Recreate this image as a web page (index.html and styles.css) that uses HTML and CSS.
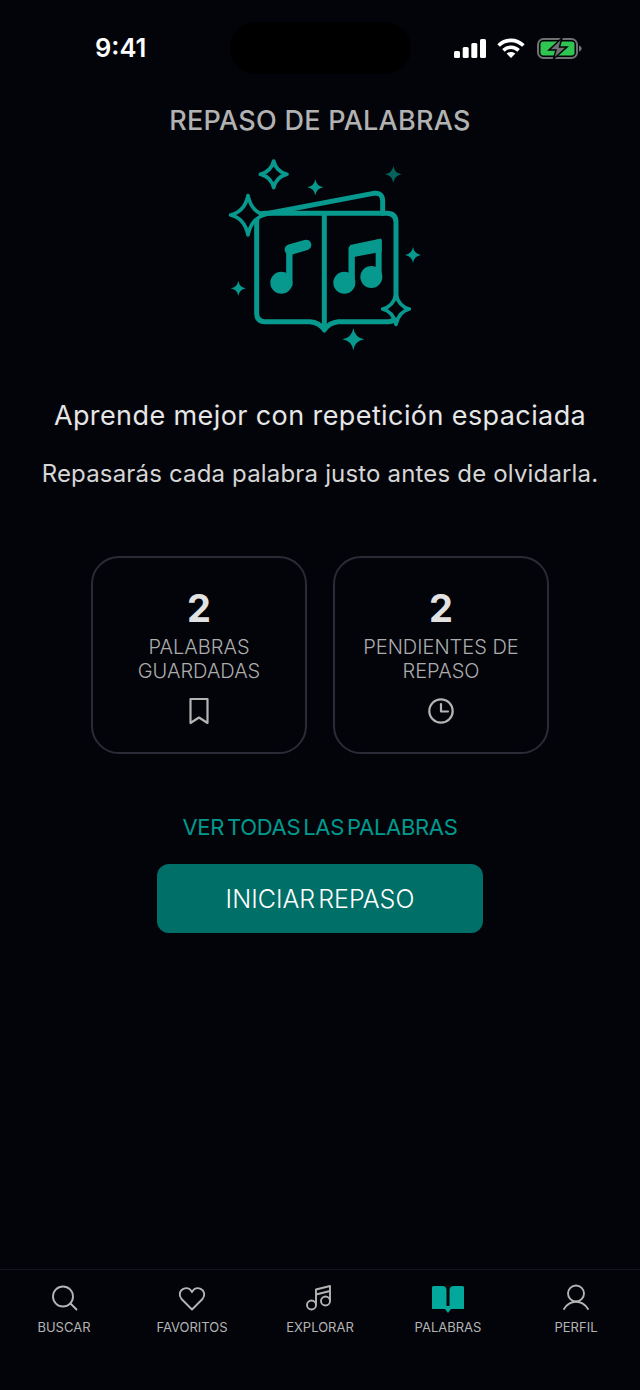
FILE: index.html
```html
<!DOCTYPE html>
<html lang="es">
  <head>
    <meta charset="UTF-8" />
    <meta name="viewport" content="width=device-width, initial-scale=1.0" />
    <title>Repaso de palabras</title>
    <link rel="stylesheet" href="styles.css">
  </head>
  <body>
    <header class="status-bar">
      <span class="status-time">9:41</span>
      <div class="island"></div>
      <div class="status-icons">
        <svg width="32" height="19" viewBox="0 0 32 19" fill="#fff">
          <rect x="0" y="12" width="6" height="7" rx="1.5" />
          <rect x="8.7" y="8" width="6" height="11" rx="1.5" />
          <rect x="17.3" y="4" width="6" height="15" rx="1.5" />
          <rect x="26" y="0" width="6" height="19" rx="1.5" />
        </svg>
        <svg class="wifi" width="28" height="20" viewBox="0 0 28 20" fill="none" stroke="#fff" stroke-width="3.6">
          <path d="M1.600 7.600C8.600 .6 19.400 .6 26.400 7.600" />
          <path d="M6.400 12.400C10.800 8.200 17.200 8.200 21.600 12.400" />
          <path d="M14 20l-4.400-4.400c2.500-2.100 6.300-2.100 8.800 0z" fill="#fff" stroke="none" />
        </svg>
        <svg class="battery" width="45" height="21" viewBox="0 0 45 21">
          <rect x="1" y="1" width="39" height="19" rx="5.500" fill="none" stroke="#6f7072" stroke-width="2" />
          <rect x="3.500" y="3.500" width="34" height="14" rx="3" fill="#30c552" />
          <path d="M42 7.500c1.600.4 2.600 1.500 2.600 3s-1 2.600-2.600 3z" fill="#6f7072" />
          <path d="M25 0L12 12h7L16.500 21 30 9h-7.500z" fill="#6f7072" stroke="#04050a" stroke-width="1.500" />
        </svg>
      </div>
    </header>

    <main class="content">
      <h1 class="title">REPASO DE PALABRAS</h1>

      <svg class="hero" width="220" height="215" viewBox="0 0 660 645">
        <defs>
          <path id="spark" d="M0-1Q.14-.14 1 0Q.14.14 0 1Q-.14.14-1 0Q-.14-.14 0-1Z" />
        </defs>
        <g fill="none" stroke="#07998e" stroke-width="15" stroke-linejoin="round" stroke-linecap="round">
          <path d="M165 207L490 145Q518 141 518 168V205" />
          <path d="M165 205H530Q558 205 558 232V505Q558 530 535 530H385Q358 532 343 555Q328 532 300 530H165Q140 530 140 505V230Q140 205 165 205Z" />
          <path d="M343 212V548" />
          <path d="M238 418V318" stroke-width="19" />
          <path d="M240 314L288 300" stroke-width="32" />
          <path d="M425 418V312" stroke-width="19" />
          <path d="M506 400V292" stroke-width="18" />
        </g>
        <g fill="#07998e">
          <circle cx="214" cy="413" r="33" />
          <circle cx="403" cy="413" r="33" />
          <circle cx="484" cy="396" r="33" />
          <path d="M420 300L510 281Q515 280 515 286V320L420 338Z" />
          <use href="#spark" transform="translate(316 127) scale(24)" />
          <use href="#spark" transform="translate(609 330) scale(24)" />
          <use href="#spark" transform="translate(85 430) scale(23)" />
          <use href="#spark" transform="translate(430 583) scale(33)" />
          <use href="#spark" transform="translate(550 88) scale(25)" fill="#04635d" />
        </g>
        <g fill="#03040a" stroke="#07998e" stroke-width="11" stroke-linejoin="round">
          <path d="M191 48Q199 80 231 88Q199 96 191 128Q183 96 151 88Q183 80 191 48Z" />
          <path d="M114 152Q124 200 163 210Q124 220 114 270Q104 220 62 210Q104 200 114 152Z" />
          <path d="M558 448Q566 484 598 492Q566 500 558 538Q550 500 518 492Q550 484 558 448Z" />
        </g>
      </svg>

      <h2 class="lead">Aprende mejor con repetición espaciada</h2>
      <p class="sub">Repasarás cada palabra justo antes de olvidarla.</p>

      <section class="stats">
        <div class="stat-card">
          <strong class="stat-num">2</strong>
          <span class="stat-label">PALABRAS GUARDADAS</span>
          <svg class="stat-icon" width="30" height="30" viewBox="0 0 30 30" fill="none" stroke="#b4b4b4" stroke-width="2.200" stroke-linejoin="round">
            <path d="M6.500 3H23.500V27L15 21.500 6.500 27Z" />
          </svg>
        </div>
        <div class="stat-card">
          <strong class="stat-num">2</strong>
          <span class="stat-label">PENDIENTES DE REPASO</span>
          <svg class="stat-icon" width="30" height="30" viewBox="0 0 30 30" fill="none" stroke="#b4b4b4" stroke-width="2.200" stroke-linecap="round" stroke-linejoin="round">
            <circle cx="15" cy="15" r="11.700" />
            <path d="M15 8V15.500H22" />
          </svg>
        </div>
      </section>

      <a class="link" href="#">VER TODAS LAS PALABRAS</a>
      <button class="start-btn">INICIAR REPASO</button>
    </main>

    <nav class="tabbar">
      <a class="tab" href="#">
        <svg width="30" height="30" viewBox="0 0 30 30" fill="none" stroke="#b4b4b4" stroke-width="1.900" stroke-linecap="round">
          <circle cx="14" cy="12.500" r="10" />
          <path d="M21.500 19.500L27.500 25.500" />
        </svg>
        <span>BUSCAR</span>
      </a>
      <a class="tab" href="#">
        <svg width="30" height="30" viewBox="0 0 30 30" fill="none" stroke="#b4b4b4" stroke-width="1.900" stroke-linejoin="round">
          <path d="M15 25.500L4.500 15C1.500 11.500 2.500 6.500 6.300 4.800 9.700 3.400 13 4.500 15 8 17 4.500 20.300 3.400 23.700 4.800 27.500 6.500 28.500 11.500 25.500 15Z" />
        </svg>
        <span>FAVORITOS</span>
      </a>
      <a class="tab" href="#">
        <svg width="30" height="30" viewBox="0 0 30 30" fill="none" stroke="#b4b4b4" stroke-width="1.900" stroke-linejoin="round">
          <circle cx="6.500" cy="21" r="4.500" />
          <circle cx="20.500" cy="17" r="4.500" />
          <path d="M11 21V5.500L25 2V17" />
          <path d="M11 10.500L25 7" />
        </svg>
        <span>EXPLORAR</span>
      </a>
      <a class="tab" href="#">
        <svg width="34" height="30" viewBox="0 0 34 30" fill="#03a89c">
          <path d="M1 3.500Q1 2 2.500 2H11Q15.500 2 15.500 6V24H2.500Q1 24 1 22.500Z" />
          <path d="M33 3.500Q33 2 31.500 2H23Q18.500 2 18.500 6V24H31.500Q33 24 33 22.500Z" />
          <path d="M1 22H33V24.500Q33 25 32 25H20L17 29 14 25H2Q1 25 1 24.500Z" />
        </svg>
        <span>PALABRAS</span>
      </a>
      <a class="tab" href="#">
        <svg width="30" height="30" viewBox="0 0 30 30" fill="none" stroke="#b4b4b4" stroke-width="1.900" stroke-linecap="round">
          <circle cx="15" cy="9.500" r="8" />
          <path d="M3 25C6 20 10 17.700 15 17.700S24 20 27 25" />
        </svg>
        <span>PERFIL</span>
      </a>
    </nav>
  </body>
</html>
```

FILE: styles.css
```css
* {
  box-sizing: border-box;
}
body {
  margin: 0;
  min-height: 1390px;
  display: flex;
  flex-direction: column;
  background: #03040a;
  font-family: Inter, "Liberation Sans", sans-serif;
  color: #fff;
}
a {
  text-decoration: none;
}

/* status bar */
.status-bar {
  display: grid;
  grid-template-columns: 230px 181px 1fr;
  align-items: center;
  height: 96px;
  padding-top: 22px;
  padding-bottom: 22px;
}
.status-time {
  padding-left: 95px;
  padding-bottom: 2px;
  font-size: 25.5px;
  font-weight: 600;
}
.island {
  height: 52px;
  border-radius: 26px;
  background: #000;
}
.status-icons {
  display: flex;
  align-items: center;
  gap: 11px;
  padding-left: 43px;
}
.battery {
  margin-left: 1px;
}

/* main */
.content {
  flex: 1;
  display: flex;
  flex-direction: column;
  align-items: center;
}
.title {
  margin: 9px 0 0;
  font-size: 27px;
  line-height: 32px;
  font-weight: 500;
  color: #b2b2b2;
  letter-spacing: 0.25px;
}
.hero {
  display: block;
  margin-top: 8px;
}
.lead {
  margin: 40px 0 0;
  font-size: 27px;
  line-height: 32px;
  font-weight: 400;
  letter-spacing: 0.4px;
  color: #e6e6e6;
}
.sub {
  margin: 27px 0 0;
  font-size: 24px;
  line-height: 30px;
  letter-spacing: 0.17px;
  color: #d6d6d6;
}
.stats {
  display: flex;
  gap: 26px;
  margin-top: 67px;
}
.stat-card {
  width: 216px;
  height: 198px;
  display: flex;
  flex-direction: column;
  align-items: center;
  padding-top: 27px;
  border: 2px solid #2a2b36;
  border-radius: 28px;
  text-align: center;
}
.stat-num {
  font-size: 38px;
  line-height: 46px;
  font-weight: 700;
  color: #e2e2e2;
}
.stat-label {
  width: 170px;
  margin-top: 4px;
  font-size: 20px;
  line-height: 24px;
  font-weight: 300;
  color: #adadad;
}
.stat-icon {
  margin-top: 13px;
}
.link {
  margin-top: 59px;
  font-size: 22px;
  line-height: 28px;
  letter-spacing: -0.3px;
  word-spacing: -3px;
  color: #009a8e;
}
.start-btn {
  width: 326px;
  height: 69px;
  margin-top: 23px;
  border: none;
  border-radius: 12px;
  background: #006f68;
  color: #fff;
  font-family: inherit;
  font-size: 25px;
  font-weight: 300;
  word-spacing: -4px;
  cursor: pointer;
}

/* bottom tabs */
.tabbar {
  display: grid;
  grid-template-columns: repeat(5, 128px);
  height: 121px;
  padding-top: 14px;
  border-top: 1px solid #14151e;
}
.tab {
  display: flex;
  flex-direction: column;
  align-items: center;
  gap: 3px;
  font-size: 13px;
  line-height: 20px;
  color: #b4b4b4;
}
```
